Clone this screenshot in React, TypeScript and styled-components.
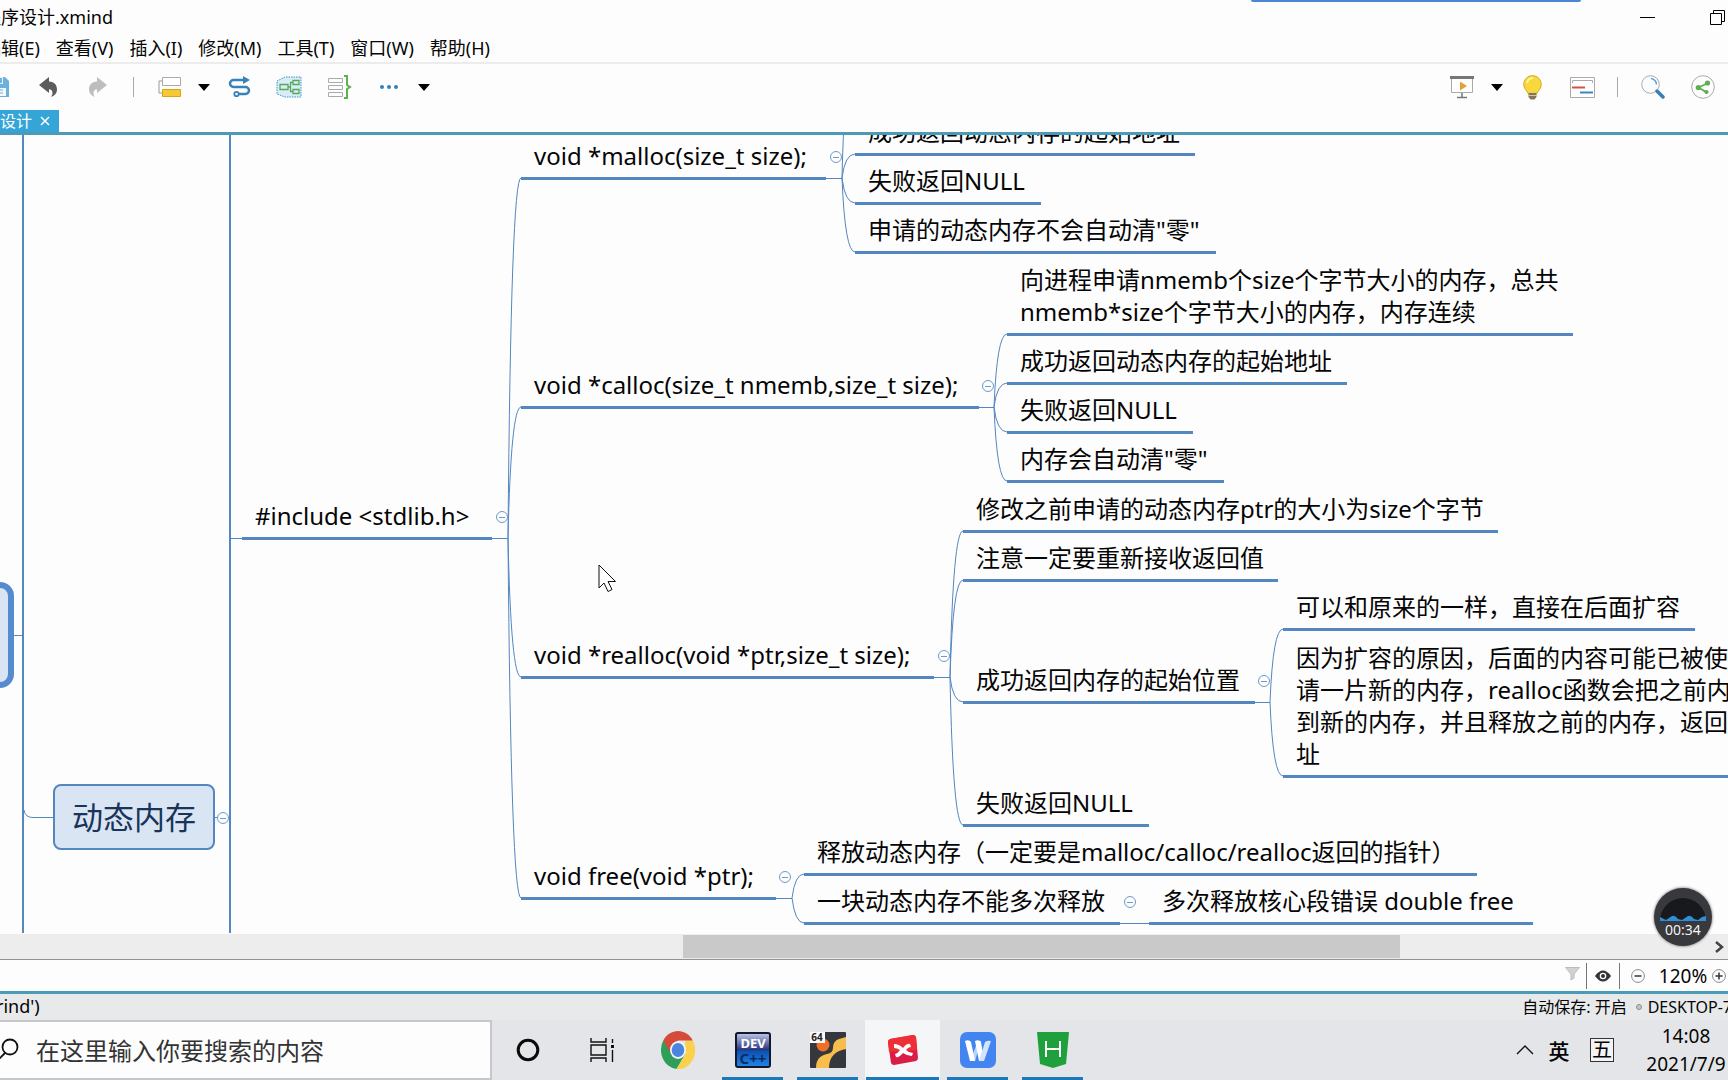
import React from "react";
import styled, { createGlobalStyle, css } from "styled-components";

const UI = `"Noto Sans", "Noto Sans CJK SC", sans-serif`;
const LINE = "#5486bf";
const TEAL = "#4a9bb8";

const Global = createGlobalStyle`
  *, *::before, *::after { box-sizing: border-box; }
  html, body, #root { margin: 0; height: 100%; }
  body { overflow: hidden; background: #fdfdfd; color: #050505; font-family: ${UI}; }
  button, input { font: inherit; color: inherit; padding: 0; border: 0; background: none; }
  svg { display: block; flex: none; }
`;

const Screen = styled.div`
  position: relative;
  display: flex;
  flex-direction: column;
  height: 100vh;
  overflow: hidden;
`;

/* ---------- window chrome ---------- */
const TitleBar = styled.header`
  display: flex;
  justify-content: space-between;
  align-items: center;
  height: 34px;
  flex: none;
`;
const DocTitle = styled.h1`
  margin: 0 0 0 -17px;
  font-size: 18px;
  font-weight: 400;
  line-height: 34px;
`;
const WindowButtons = styled.div`
  display: flex;
  margin-right: -24px;
`;
const WindowButton = styled.button`
  display: grid;
  place-items: center;
  width: 70px;
  height: 32px;
`;
const ShareStrip = styled.div`
  position: absolute;
  top: 0;
  right: 147px;
  width: 330px;
  height: 2px;
  border-radius: 0 0 4px 4px;
  background: #4b86d2;
`;
const MenuBar = styled.nav`
  display: flex;
  gap: 16px;
  height: 30px;
  flex: none;
  margin-left: -17px;
  border-bottom: 2px solid #ececec;
`;
const MenuButton = styled.button`
  font-size: 18px;
  line-height: 28px;
  white-space: nowrap;
`;
const Toolbar = styled.div`
  display: flex;
  justify-content: space-between;
  height: 46px;
  flex: none;
`;
const ToolGroup = styled.div<{ $bleed?: boolean }>`
  display: flex;
  align-items: center;
  margin-left: ${(p) => (p.$bleed ? "-27px" : "0")};
`;
const Tool = styled.button<{ $narrow?: boolean }>`
  display: grid;
  place-items: center;
  width: ${(p) => (p.$narrow ? "20px" : "50px")};
  height: 40px;
`;
const ToolDivider = styled.span`
  width: 1px;
  height: 20px;
  margin: 0 10px;
  background: #aaa;
`;
const TabStrip = styled.div`
  display: flex;
  height: 25px;
  flex: none;
  border-bottom: 3px solid ${TEAL};
`;
const Tab = styled.div`
  display: flex;
  align-items: center;
  gap: 7px;
  margin-left: -32px;
  padding-right: 8px;
  background: #35a5d8;
  color: #fff;
  font-size: 16px;
  line-height: 24px;
  white-space: nowrap;
`;
const TabClose = styled.button`
  display: grid;
  place-items: center;
  width: 12px;
  height: 20px;
`;

/* ---------- mind map ---------- */
const Canvas = styled.main`
  position: relative;
  flex: 1;
  min-height: 0;
  overflow: hidden;
`;
const Links = styled.svg`
  position: absolute;
  inset: 0;
  width: 100%;
  height: 100%;
  overflow: visible;
  fill: none;
  stroke: ${LINE};
`;
const Topic = styled.div<{ $x: number; $y: number; $w?: number; $lines: number }>`
  position: absolute;
  left: ${(p) => p.$x}px;
  top: ${(p) => p.$y - 38 - (p.$lines - 1) * 32}px;
  width: ${(p) => (p.$w ? `${p.$w}px` : "auto")};
  padding: 0 12px 5px 13px;
  border-bottom: 3px solid ${LINE};
  font-size: 24px;
  line-height: 32px;
  white-space: pre;
`;
const boxed = css`
  position: absolute;
  background: #dae5f3;
  border-style: solid;
`;
const MainTopic = styled.div`
  ${boxed}
  left: 53px;
  top: 649px;
  width: 162px;
  height: 66px;
  border-width: 2px;
  border-color: ${LINE};
  border-radius: 8px;
  color: #18345a;
  font-size: 31px;
  line-height: 62px;
  text-align: center;
`;
const CentralTopic = styled.div`
  ${boxed}
  left: -60px;
  top: 447px;
  width: 74px;
  height: 106px;
  border-width: 6px;
  border-color: #568bd0;
  border-radius: 14px;
`;
const Toggle = styled.button<{ $x: number; $y: number }>`
  position: absolute;
  left: ${(p) => p.$x - 6}px;
  top: ${(p) => p.$y - 6}px;
  display: grid;
  place-items: center;
  width: 12px;
  height: 12px;
  border: 1px solid #6f9aca;
  border-radius: 50%;
  background: #fdfdfd;
  &::after {
    content: "";
    width: 6px;
    height: 1px;
    background: #6f9aca;
  }
`;
const Pointer = styled.svg`
  position: absolute;
  left: 598px;
  top: 429px;
`;

/* ---------- bottom bars ---------- */
const ScrollTrack = styled.div`
  display: flex;
  align-items: center;
  justify-content: space-between;
  height: 26px;
  flex: none;
  padding: 0 3px 0 0;
  background: #ededed;
  border-bottom: 1px solid #929292;
`;
const ScrollRail = styled.div`
  display: grid;
  grid-template-columns: 683fr 717fr 313fr;
  flex: 1;
  height: 23px;
`;
const ScrollThumb = styled.div`
  grid-column: 2;
  background: #c9c9c9;
`;
const ScrollNext = styled.button`
  display: grid;
  place-items: center;
  width: 12px;
  height: 24px;
`;
const StatusBar = styled.div`
  display: flex;
  align-items: center;
  justify-content: flex-end;
  height: 34px;
  flex: none;
  border-bottom: 3px solid ${TEAL};
`;
const StatusButton = styled.button<{ $w: number }>`
  display: grid;
  place-items: center;
  width: ${(p) => p.$w}px;
  height: 30px;
`;
const StatusDivider = styled.span`
  width: 1px;
  height: 26px;
  background: #777;
`;
const ZoomValue = styled.span`
  width: 54px;
  font-size: 19px;
  line-height: 28px;
  text-align: center;
`;
const InfoBar = styled.footer`
  display: flex;
  justify-content: space-between;
  height: 26px;
  flex: none;
  overflow: hidden;
  background: #e8e9eb;
  font-size: 18px;
  line-height: 24px;
  white-space: nowrap;
`;
const FileInfo = styled.span`
  margin-left: -4px;
`;
const SaveInfo = styled.span`
  display: flex;
  align-items: center;
  margin-right: -4px;
  font-size: 16px;
  line-height: 26px;
`;
const Dot = styled.i`
  width: 6px;
  height: 6px;
  margin: 0 6px 0 9px;
  border: 1px solid #8f8f8f;
  border-radius: 50%;
  background: #c4c4c4;
`;

const Taskbar = styled.footer`
  display: flex;
  height: 60px;
  flex: none;
  background: #e3e5e8;
`;
const SearchBox = styled.label`
  display: flex;
  align-items: center;
  width: 492px;
  border: 2px solid #c6c7c9;
  border-left: 0;
  background: #fdfdfd;
`;
const SearchInput = styled.input`
  flex: 1;
  margin-left: 17px;
  font-size: 24px;
  outline: 0;
  &::placeholder { color: #333; opacity: 1; }
`;
const Apps = styled.div`
  display: flex;
  flex: 1;
  margin-left: -2px;
`;
const AppButton = styled.button<{ $state?: "open" | "active" }>`
  position: relative;
  display: grid;
  place-items: center;
  width: 75px;
  height: 60px;
  background: ${(p) => (p.$state === "active" ? "#f5f6f8" : "transparent")};
  &::after {
    content: "";
    position: absolute;
    bottom: 0;
    left: ${(p) => (p.$state === "active" ? 1 : 7)}px;
    right: ${(p) => (p.$state === "active" ? 1 : 7)}px;
    height: 3px;
    background: ${(p) => (p.$state ? "#1a79bd" : "transparent")};
  }
`;
const Tray = styled.div`
  display: flex;
  align-items: center;
  margin-right: -2px;
`;
const TrayButton = styled.button`
  display: grid;
  place-items: center;
  width: 34px;
  height: 40px;
  font-size: 21px;
  font-weight: 500;
`;
const ImeMode = styled.button`
  width: 24px;
  height: 24px;
  margin: 0 28px 0 14px;
  border: 1px solid #333;
  background: #f4f4f4;
  font-size: 20px;
  line-height: 20px;
`;
const Clock = styled.div`
  width: 88px;
  font-size: 19px;
  line-height: 28px;
  text-align: center;
`;
const Recorder = styled.div`
  position: absolute;
  right: 16px;
  bottom: 134px;
  display: flex;
  flex-direction: column;
  align-items: center;
  width: 58px;
  height: 58px;
  padding-top: 5px;
  border-radius: 50%;
  background: #38393c;
  box-shadow: 0 0 3px #555;
  color: #f2f2f2;
  font-size: 14px;
  line-height: 14px;
`;

/* ---------- data ---------- */
type Node = { x: number; y: number; w?: number; text: string };
// y is the centre of the topic's underline, measured from the top of the canvas
const topics: Node[] = [
  { x: 242, y: 403, w: 250, text: "#include <stdlib.h>" },
  { x: 521, y: 43, w: 305, text: "void *malloc(size_t size);" },
  { x: 855, y: 19, w: 340, text: "成功返回动态内存的起始地址" },
  { x: 855, y: 68, w: 186, text: "失败返回NULL" },
  { x: 855, y: 117, w: 361, text: "申请的动态内存不会自动清\"零\"" },
  { x: 521, y: 272, w: 458, text: "void *calloc(size_t nmemb,size_t size);" },
  { x: 1007, y: 199, w: 566, text: "向进程申请nmemb个size个字节大小的内存，总共\nnmemb*size个字节大小的内存，内存连续" },
  { x: 1007, y: 248, w: 340, text: "成功返回动态内存的起始地址" },
  { x: 1007, y: 297, w: 186, text: "失败返回NULL" },
  { x: 1007, y: 346, w: 217, text: "内存会自动清\"零\"" },
  { x: 521, y: 542, w: 413, text: "void *realloc(void *ptr,size_t size);" },
  { x: 963, y: 396, w: 535, text: "修改之前申请的动态内存ptr的大小为size个字节" },
  { x: 963, y: 445, w: 315, text: "注意一定要重新接收返回值" },
  { x: 963, y: 567, w: 292, text: "成功返回内存的起始位置" },
  { x: 963, y: 690, w: 186, text: "失败返回NULL" },
  { x: 1283, y: 494, w: 412, text: "可以和原来的一样，直接在后面扩容" },
  {
    x: 1283,
    y: 641,
    text: "因为扩容的原因，后面的内容可能已被使用，会申\n请一片新的内存，realloc函数会把之前内存的内容\n到新的内存，并且释放之前的内存，返回新的首地\n址",
  },
  { x: 521, y: 763, w: 255, text: "void free(void *ptr);" },
  { x: 804, y: 739, w: 673, text: "释放动态内存（一定要是malloc/calloc/realloc返回的指针）" },
  { x: 804, y: 788, w: 316, text: "一块动态内存不能多次释放" },
  { x: 1149, y: 788, w: 384, text: "多次释放核心段错误 double free" },
];

type Fork = { from: number; trunk: number; y: number; to: number; ys: number[] };
const forks: Fork[] = [
  { from: 492, trunk: 508, y: 403, to: 521, ys: [43, 272, 542, 763] },
  { from: 826, trunk: 842, y: 43, to: 855, ys: [-80, 19, 68, 117] },
  { from: 979, trunk: 994, y: 272, to: 1007, ys: [199, 248, 297, 346] },
  { from: 934, trunk: 950, y: 542, to: 963, ys: [396, 445, 567, 690] },
  { from: 1255, trunk: 1270, y: 567, to: 1283, ys: [494, 641] },
  { from: 776, trunk: 792, y: 763, to: 804, ys: [739, 788] },
];
const toggles: [number, number][] = [
  [502, 382], [836, 22], [988, 251], [944, 521], [1264, 546], [785, 742], [1130, 767], [223, 683],
];
const menus = ["编辑(E)", "查看(V)", "插入(I)", "修改(M)", "工具(T)", "窗口(W)", "帮助(H)"];

/* ---------- icons ---------- */
const Caret = () => (
  <svg width="12" height="7" viewBox="0 0 12 7"><path d="M0 0h12L6 7z" fill="#000" /></svg>
);
const SaveIcon = () => (
  <svg width="24" height="22" viewBox="0 0 24 22">
    <path d="M1 1h18l4 4v16H1z" fill="#6cb0dc" />
    <path d="M5 1h12v7H5z" fill="#e4f1fa" /><path d="M13 2h3v5h-3z" fill="#6cb0dc" />
    <path d="M4 12h16v8H4z" fill="#f6fafd" /><path d="M7 14h10M7 17h10" stroke="#6cb0dc" />
  </svg>
);
const UndoIcon = ({ color, flip }: { color: string; flip?: boolean }) => (
  <svg width="20" height="20" viewBox="0 0 20 20">
    <path transform={flip ? "matrix(-1 0 0 1 20 0)" : undefined} fill={color}
      d="M1 8 11 0v4.500c5.500.3 8 3.500 8 8 0 3.500-2 6-6 7.500 2.500-3.500 2-7.500-2-7.800V16z" />
  </svg>
);
const TopicIcon = () => (
  <svg width="23" height="21" viewBox="0 0 23 21" fill="none">
    <path d="M4 4H1v12h3" stroke="#999" />
    <path d="M4.500.5h18v8h-18z" fill="#fff" stroke="#aaa" />
    <path d="M4.500 12.500h18v7h-18z" fill="#f5c934" stroke="#d9a514" />
  </svg>
);
const RelationIcon = () => (
  <svg width="23" height="22" viewBox="0 0 23 22" fill="none" stroke="#3982b8" strokeWidth="2.500">
    <path d="M17 4H5.500a3.500 3.500 0 0 0 0 7h12a3.500 3.500 0 0 1 0 7H11" />
    <path d="M15 0l7 4-7 4z" fill="#3982b8" stroke="none" />
    <circle cx="8.500" cy="18" r="2.200" strokeWidth="1.800" />
  </svg>
);
const BoundaryIcon = () => (
  <svg width="26" height="22" viewBox="0 0 26 22" fill="none">
    <path d="M1 5 9 1h16v20H9l-8-3z" fill="#d9edf8" stroke="#3e93c9" strokeDasharray="1.500 1" />
    <path d="M4 8.500h8v5H4zM17 4.500h6v4h-6zM17 13.500h6v4h-6zM12 11h2.500M17 6.500h-2.500v9H17" stroke="#58a85c" strokeWidth="1.300" />
  </svg>
);
const SummaryIcon = () => (
  <svg width="25" height="24" viewBox="0 0 25 24" fill="none">
    <path d="M1.500 3.500h14v4h-14zM1.500 10.500h14v4h-14zM1.500 17.500h14v4h-14z" stroke="#aaa" />
    <path d="M17 1h3v9l3 2-3 2v9h-3" stroke="#5fb04e" strokeWidth="2" />
  </svg>
);
const MoreIcon = () => (
  <svg width="18" height="6" viewBox="0 0 18 6" fill="#3181bd">
    <circle cx="2" cy="3" r="2" /><circle cx="9" cy="3" r="2" /><circle cx="16" cy="3" r="2" />
  </svg>
);
const PresentIcon = () => (
  <svg width="24" height="23" viewBox="0 0 24 23" fill="none">
    <path d="M1.500 2.500h21v14h-21z" fill="#fff" stroke="#aaa" />
    <path d="M0 0h24v3H0z" fill="#777" /><path d="M10 5.500 17 10l-7 4.500z" fill="#e3a13a" />
    <path d="M12 17v4M7 21.500h10" stroke="#777" strokeWidth="1.500" />
  </svg>
);
const BulbIcon = () => (
  <svg width="19" height="25" viewBox="0 0 19 25">
    <path d="M9.500.6a8.800 8.800 0 0 0-8.800 8.800c0 4 3 5.600 4.300 9h9c1.300-3.400 4.300-5 4.300-9A8.800 8.800 0 0 0 9.500.6z" fill="#f8d83c" stroke="#d8a91c" />
    <path d="M4 8a6 6 0 0 1 6-5" stroke="#fff3a8" strokeWidth="2" fill="none" />
    <path d="M5.500 18h8v4l-2 2.500h-4l-2-2.500z" fill="#85765a" /><path d="M5.500 20.500h8" stroke="#cfc4ad" />
  </svg>
);
const NotesIcon = () => (
  <svg width="25" height="21" viewBox="0 0 25 21" fill="none">
    <path d="M.5.5h24v20H.5z" fill="#fff" stroke="#aaa" />
    <path d="M2.500 6V3.500h20V6" stroke="#aaa" />
    <path d="M2 10.500h13" stroke="#cf5548" strokeWidth="2" /><path d="M10 15.500h13" stroke="#3c86bf" strokeWidth="2" />
  </svg>
);
const FindIcon = () => (
  <svg width="24" height="24" viewBox="0 0 24 24" fill="none">
    <circle cx="9.500" cy="9.500" r="8.800" fill="#fafdff" stroke="#aaa" />
    <path d="M10 3.500a6 6 0 0 1 5.500 6" stroke="#5c9fd0" strokeWidth="1.500" />
    <path d="m16 16 6 6" stroke="#3a7fb5" strokeWidth="3.500" strokeLinecap="round" />
  </svg>
);
const ShareIcon = () => (
  <svg width="24" height="24" viewBox="0 0 24 24" fill="none">
    <circle cx="12" cy="12" r="11.300" stroke="#aaa" />
    <path d="M16 8.500 7.500 12.500 15 17" stroke="#5fae54" strokeWidth="1.800" />
    <g fill="#5fae54"><circle cx="16.500" cy="8" r="2.600" /><circle cx="7.300" cy="12.600" r="2.600" /><circle cx="15.500" cy="17" r="2.100" /></g>
  </svg>
);
const ZoomIcon = ({ plus }: { plus?: boolean }) => (
  <svg width="14" height="14" viewBox="0 0 14 14" fill="none">
    <circle cx="7" cy="7" r="6.400" stroke="#888" />
    <path d={plus ? "M3.500 7h7M7 3.500v7" : "M3.500 7h7"} stroke="#333" strokeWidth="1.500" />
  </svg>
);
const ChromeIcon = () => (
  <svg width="34" height="38" viewBox="0 0 34 34" preserveAspectRatio="none">
    <path d="M2.300 8.500A17 17 0 0 0 15.500 34L24 21z" fill="#2f9e58" />
    <path d="M31.700 8.500A17 17 0 0 1 15.500 34L24.400 21 24 8.500z" fill="#fbd04a" />
    <path d="M2.300 8.500A17 17 0 0 1 31.700 8.500H17L10 20z" fill="#d64a3c" />
    <circle cx="17" cy="17" r="8" fill="#f5f5f5" /><circle cx="17" cy="17" r="6.300" fill="#4a86e0" />
  </svg>
);
const DevIcon = () => (
  <svg width="36" height="36" viewBox="0 0 36 36">
    <defs>
      <linearGradient id="dev" x2="0" y2="1">
        <stop stopColor="#c3cbee" /><stop offset=".5" stopColor="#26337c" /><stop offset=".52" stopColor="#0d50ae" /><stop offset="1" stopColor="#1f86ea" />
      </linearGradient>
    </defs>
    <rect x="1" y="1" width="34" height="34" rx="2" fill="url(#dev)" stroke="#10182e" strokeWidth="2" />
    <text x="18" y="16" textAnchor="middle" fontSize="13" fontWeight="700" fill="#fff">DEV</text>
    <text x="18" y="32" textAnchor="middle" fontSize="15" fontWeight="700" fill="#0a2b66">C++</text>
  </svg>
);
const EmulatorIcon = () => (
  <svg width="36" height="36" viewBox="0 0 36 36">
    <rect width="36" height="36" rx="1" fill="#34373e" />
    <circle cx="13" cy="13" r="6.500" fill="#ee6f26" />
    <path d="M36 5 29 7q-6 2-6 9 0 5-6 6-11 2-11 14h13q0-16 17-19z" fill="#f9bd4e" />
    <rect width="15" height="11" fill="#fafafa" />
    <text x="7" y="9" textAnchor="middle" fontSize="10" fontWeight="700" fill="#222">64</text>
  </svg>
);
const XmindIcon = () => (
  <svg width="32" height="32" viewBox="0 0 32 32">
    <path d="M3 5 26 1q2 0 3 2l2 21q0 2-2 3L7 31q-2 0-3-2L1 8q0-2 2-3z" fill="#d91c48" />
    <path d="M3 5 26 1q2 0 3 2l1 13L2 18 1 8q0-2 2-3z" fill="#ee2f35" />
    <path d="M7 10q5 0 9 4 4-5 7-4l1 3q-3 0-5 3 3 3 7 3l-1 3q-5 0-9-3-4 5-7 4l-1-3q3-1 5-4-3-2-6-2z" fill="#fff" />
  </svg>
);
const WpsIcon = () => (
  <svg width="36" height="36" viewBox="0 0 36 36">
    <rect width="36" height="36" rx="7" fill="#4285f0" />
    <path d="M15 29 21 9h-3l-8 20z" fill="#b9d3fb" />
    <path d="M5 9q4-2 6 1l4 19h-5z" fill="#fff" />
    <path d="M15 9q4-2 6 1l3 19h-5z" fill="#fff" /><path d="M19 29 25 10q3-2 6-1l-7 20z" fill="#d4e4fd" />
  </svg>
);
const HBuilderIcon = () => (
  <svg width="32" height="36" viewBox="0 0 32 36" fill="none">
    <path d="M0 0h32l-3 32-13 4-13-4z" fill="#1fa03c" />
    <path d="M9 9v16M23 9v16M9 17h14" stroke="#fff" strokeWidth="2" />
  </svg>
);

const curve = (f: Fork, y: number) => `M${f.trunk} ${f.y}Q${f.trunk + 3} ${y} ${f.to} ${y}`;

export default function App() {
  return (
    <Screen>
      <Global />
      <TitleBar>
        <DocTitle>程序设计.xmind</DocTitle>
        <WindowButtons>
          <WindowButton aria-label="最小化">
            <svg width="15" height="15" viewBox="0 0 15 15"><path d="M0 7.500h15" stroke="#000" /></svg>
          </WindowButton>
          <WindowButton aria-label="还原">
            <svg width="15" height="15" viewBox="0 0 15 15" fill="none" stroke="#000">
              <path d="M.5 3.500h11v11H.5zM3.500 3.500v-3h11v11h-3" />
            </svg>
          </WindowButton>
        </WindowButtons>
      </TitleBar>
      <ShareStrip />
      <MenuBar>{menus.map((m) => <MenuButton key={m}>{m}</MenuButton>)}</MenuBar>
      <Toolbar>
        <ToolGroup $bleed>
          <Tool aria-label="保存"><SaveIcon /></Tool>
          <Tool aria-label="撤销"><UndoIcon color="#5c5c5c" /></Tool>
          <Tool aria-label="重做"><UndoIcon color="#bdbdbd" flip /></Tool>
          <ToolDivider />
          <Tool aria-label="主题"><TopicIcon /></Tool>
          <Tool $narrow aria-label="主题选项"><Caret /></Tool>
          <Tool aria-label="联系"><RelationIcon /></Tool>
          <Tool aria-label="外框"><BoundaryIcon /></Tool>
          <Tool aria-label="概要"><SummaryIcon /></Tool>
          <Tool aria-label="更多"><MoreIcon /></Tool>
          <Tool $narrow aria-label="更多选项"><Caret /></Tool>
        </ToolGroup>
        <ToolGroup>
          <Tool aria-label="演示"><PresentIcon /></Tool>
          <Tool $narrow aria-label="演示选项"><Caret /></Tool>
          <Tool aria-label="头脑风暴"><BulbIcon /></Tool>
          <Tool aria-label="甘特图"><NotesIcon /></Tool>
          <ToolDivider />
          <Tool aria-label="查找"><FindIcon /></Tool>
          <Tool aria-label="分享"><ShareIcon /></Tool>
        </ToolGroup>
      </Toolbar>
      <TabStrip>
        <Tab>
          程序设计
          <TabClose aria-label="关闭">
            <svg width="10" height="10" viewBox="0 0 10 10"><path d="m1 1 8 8M9 1 1 9" stroke="#fff" strokeWidth="1.500" /></svg>
          </TabClose>
        </Tab>
      </TabStrip>

      <Canvas>
        <Links>
          <path d="M23 0V798M230 0V798" strokeWidth="2" />
          <path d="M14 500.500H23M24 675Q25 682.500 33 682.500H53M215 682.500H230M230 403.500H242M1120 788.500H1149" />
          {forks.map((f) => (
            <path key={f.from} d={`M${f.from} ${f.y + 0.5}H${f.trunk}` + f.ys.map((y) => curve(f, y)).join("")} />
          ))}
        </Links>
        <CentralTopic />
        <MainTopic>动态内存</MainTopic>
        {topics.map((t) => (
          <Topic key={`${t.x}-${t.y}`} $x={t.x} $y={t.y} $w={t.w} $lines={t.text.split("\n").length}>
            {t.text}
          </Topic>
        ))}
        {toggles.map(([x, y]) => <Toggle key={`${x}-${y}`} $x={x} $y={y} aria-label="折叠" />)}
        <Pointer width="19" height="29" viewBox="0 0 19 29">
          <path d="M1 1v23l5-5 4 8.500 4-2-4-8h7.500z" fill="#fff" stroke="#111" />
        </Pointer>
      </Canvas>

      <ScrollTrack>
        <ScrollRail><ScrollThumb /></ScrollRail>
        <ScrollNext aria-label="向右滚动">
          <svg width="9" height="12" viewBox="0 0 9 12"><path d="m1 1 6 5-6 5" fill="none" stroke="#444" strokeWidth="2.500" /></svg>
        </ScrollNext>
      </ScrollTrack>
      <StatusBar>
        <StatusButton $w={28} aria-label="筛选">
          <svg width="15" height="20" viewBox="0 0 15 20"><path d="M.5 1.500h14L9 8v4l-3 2V8z" fill="#d2d2d2" stroke="#bbb" /></svg>
        </StatusButton>
        <StatusDivider />
        <StatusButton $w={32} aria-label="显示">
          <svg width="16" height="12" viewBox="0 0 16 12"><path d="M0 6q8-11 16 0-8 11-16 0z" fill="#333" /><circle cx="8" cy="6" r="3.300" fill="#fff" /><circle cx="8" cy="6" r="2" fill="#333" /></svg>
        </StatusButton>
        <StatusDivider />
        <StatusButton $w={36} aria-label="缩小"><ZoomIcon /></StatusButton>
        <ZoomValue>120%</ZoomValue>
        <StatusButton $w={18} aria-label="放大"><ZoomIcon plus /></StatusButton>
      </StatusBar>
      <InfoBar>
        <FileInfo>rind')</FileInfo>
        <SaveInfo>自动保存: 开启<Dot />DESKTOP-7</SaveInfo>
      </InfoBar>
      <Taskbar>
        <SearchBox>
          <svg width="19" height="24" viewBox="0 0 19 24" fill="none" stroke="#111" strokeWidth="1.800">
            <circle cx="10" cy="9" r="7.500" /><path d="m5 15-7 7" />
          </svg>
          <SearchInput aria-label="搜索" placeholder="在这里输入你要搜索的内容" />
        </SearchBox>
        <Apps>
          <AppButton aria-label="Cortana">
            <svg width="24" height="24" viewBox="0 0 24 24"><circle cx="12" cy="12" r="9.800" fill="none" stroke="#0a0a0a" strokeWidth="3" /></svg>
          </AppButton>
          <AppButton aria-label="任务视图">
            <svg width="25" height="24" viewBox="0 0 25 24" fill="none" stroke="#111" strokeWidth="1.400">
              <path d="M1 0v4h15V0M1 7h15v10H1zM1 24v-4h15v4M22.500 1v4M22.500 12v12" /><path d="M21 7h3v3h-3z" fill="#111" stroke="none" />
            </svg>
          </AppButton>
          <AppButton aria-label="Chrome"><ChromeIcon /></AppButton>
          <AppButton $state="open" aria-label="Dev-C++"><DevIcon /></AppButton>
          <AppButton $state="open" aria-label="VMware"><EmulatorIcon /></AppButton>
          <AppButton $state="active" aria-label="XMind"><XmindIcon /></AppButton>
          <AppButton $state="open" aria-label="WPS"><WpsIcon /></AppButton>
          <AppButton $state="open" aria-label="HBuilder"><HBuilderIcon /></AppButton>
        </Apps>
        <Tray>
          <TrayButton aria-label="显示隐藏的图标">
            <svg width="18" height="10" viewBox="0 0 18 10"><path d="m1 9 8-8 8 8" fill="none" stroke="#111" strokeWidth="1.400" /></svg>
          </TrayButton>
          <TrayButton>英</TrayButton>
          <ImeMode>五</ImeMode>
          <Clock>14:08<br />2021/7/9</Clock>
        </Tray>
      </Taskbar>
      <Recorder>
        <svg width="48" height="30" viewBox="0 0 48 30">
          <path d="M1 28A23 23 0 0 1 47 28z" fill="#17191d" />
          <path d="M1 28v-4l6 3 6-4q3-1 6 3l4 1 6-4q3-1 6 3l4 1 4-3 4-1v5z" fill="#2e8fd8" />
        </svg>
        00:34
      </Recorder>
    </Screen>
  );
}
